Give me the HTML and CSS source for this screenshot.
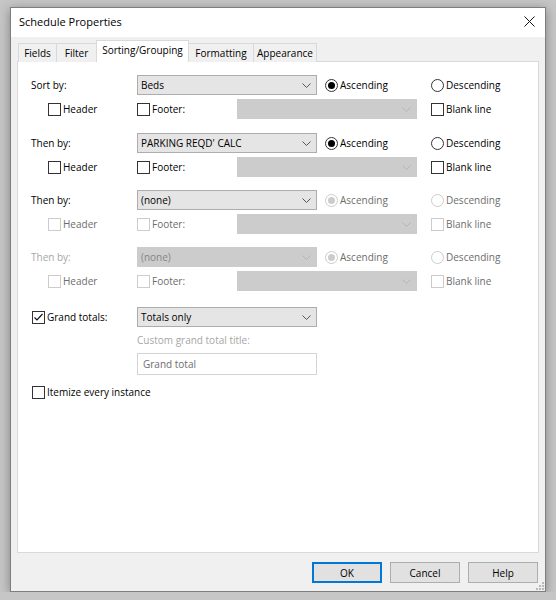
FILE: index.html
```html
<!DOCTYPE html>
<html>
<head>
<meta charset="utf-8">
<link rel="stylesheet" href="styles.css">
</head>
<body>
<div class="dialog">
  <div class="titlebar">
    <span class="title">Schedule Properties</span>
    <svg class="close" width="11" height="11" viewBox="0 0 11 11"><path d="M0.5 0.5L10.5 10.5M10.5 0.5L0.5 10.5" stroke="#111" stroke-width="1" fill="none"/></svg>
  </div>
  <div class="content">
    <div class="tabs">
      <div class="tab t-fields">Fields</div>
      <div class="tab t-filter">Filter</div>
      <div class="tab t-sort active">Sorting/Grouping</div>
      <div class="tab t-format">Formatting</div>
      <div class="tab t-appear">Appearance</div>
    </div>
    <div class="panel">
      <div class="groups">
        <div class="group">
          <div class="row-main">
            <span class="lbl">Sort by:</span>
            <div class="select"><span>Beds</span><svg class="chev" width="9" height="5" viewBox="0 0 9 5"><path d="M0.5 0.5L4.5 4.5L8.5 0.5" fill="none" stroke="#555" stroke-width="1"/></svg></div>
            <label class="radio asc checked"><i></i>Ascending</label>
            <label class="radio"><i></i>Descending</label>
          </div>
          <div class="row-sub">
            <label class="check hdr"><i></i>Header</label>
            <label class="check ftr"><i></i>Footer:</label>
            <div class="select off wide"><span></span><svg class="chev" width="9" height="5" viewBox="0 0 9 5"><path d="M0.5 0.5L4.5 4.5L8.5 0.5" fill="none" stroke="#b4b4b4" stroke-width="1"/></svg></div>
            <label class="check blank"><i></i>Blank line</label>
          </div>
        </div>
        <div class="group">
          <div class="row-main">
            <span class="lbl">Then by:</span>
            <div class="select"><span>PARKING REQD' CALC</span><svg class="chev" width="9" height="5" viewBox="0 0 9 5"><path d="M0.5 0.5L4.5 4.5L8.5 0.5" fill="none" stroke="#555" stroke-width="1"/></svg></div>
            <label class="radio asc checked"><i></i>Ascending</label>
            <label class="radio"><i></i>Descending</label>
          </div>
          <div class="row-sub">
            <label class="check hdr"><i></i>Header</label>
            <label class="check ftr"><i></i>Footer:</label>
            <div class="select off wide"><span></span><svg class="chev" width="9" height="5" viewBox="0 0 9 5"><path d="M0.5 0.5L4.5 4.5L8.5 0.5" fill="none" stroke="#b4b4b4" stroke-width="1"/></svg></div>
            <label class="check blank"><i></i>Blank line</label>
          </div>
        </div>
        <div class="group">
          <div class="row-main">
            <span class="lbl">Then by:</span>
            <div class="select"><span>(none)</span><svg class="chev" width="9" height="5" viewBox="0 0 9 5"><path d="M0.5 0.5L4.5 4.5L8.5 0.5" fill="none" stroke="#555" stroke-width="1"/></svg></div>
            <label class="radio asc checked dis"><i></i>Ascending</label>
            <label class="radio dis"><i></i>Descending</label>
          </div>
          <div class="row-sub">
            <label class="check hdr dis"><i></i>Header</label>
            <label class="check ftr dis"><i></i>Footer:</label>
            <div class="select off wide"><span></span><svg class="chev" width="9" height="5" viewBox="0 0 9 5"><path d="M0.5 0.5L4.5 4.5L8.5 0.5" fill="none" stroke="#b4b4b4" stroke-width="1"/></svg></div>
            <label class="check blank dis"><i></i>Blank line</label>
          </div>
        </div>
        <div class="group">
          <div class="row-main">
            <span class="lbl dis-lbl">Then by:</span>
            <div class="select off"><span class="off-text">(none)</span><svg class="chev" width="9" height="5" viewBox="0 0 9 5"><path d="M0.5 0.5L4.5 4.5L8.5 0.5" fill="none" stroke="#b4b4b4" stroke-width="1"/></svg></div>
            <label class="radio asc checked dis"><i></i>Ascending</label>
            <label class="radio dis"><i></i>Descending</label>
          </div>
          <div class="row-sub">
            <label class="check hdr dis"><i></i>Header</label>
            <label class="check ftr dis"><i></i>Footer:</label>
            <div class="select off wide"><span></span><svg class="chev" width="9" height="5" viewBox="0 0 9 5"><path d="M0.5 0.5L4.5 4.5L8.5 0.5" fill="none" stroke="#b4b4b4" stroke-width="1"/></svg></div>
            <label class="check blank dis"><i></i>Blank line</label>
          </div>
        </div>
      </div>

      <div class="totals">
        <div class="row-main">
          <label class="check gt"><i><svg width="11" height="11" viewBox="0 0 11 11"><path d="M1.5 5.5L4 8L9.5 2" fill="none" stroke="#111" stroke-width="1.2"/></svg></i>Grand totals:</label>
          <div class="select"><span>Totals only</span><svg class="chev" width="9" height="5" viewBox="0 0 9 5"><path d="M0.5 0.5L4.5 4.5L8.5 0.5" fill="none" stroke="#555" stroke-width="1"/></svg></div>
        </div>
        <div class="custom">
          <span class="custom-lbl">Custom grand total title:</span>
          <div class="textbox">Grand total</div>
        </div>
      </div>

      <label class="check itemize"><i></i>Itemize every instance</label>
    </div>
    <div class="buttons">
      <div class="btn default">OK</div>
      <div class="btn">Cancel</div>
      <div class="btn">Help</div>
    </div>
  </div>
  <svg class="grip" width="9" height="9" viewBox="0 0 9 9"><g fill="#b8b8b8"><rect x="7" y="1" width="2" height="2"/><rect x="4" y="4" width="2" height="2"/><rect x="7" y="4" width="2" height="2"/><rect x="1" y="7" width="2" height="2"/><rect x="4" y="7" width="2" height="2"/><rect x="7" y="7" width="2" height="2"/></g></svg>
</div>
</body>
</html>
```

FILE: styles.css
```css
* { box-sizing: border-box; }

body {
  margin: 0;
  padding: 7px 10px 0 10px;
  background: #c6c6c6;
  font-family: "Open Sans", "Noto Sans", Arial, sans-serif;
  font-size: 10px;
  color: #000;
}

.dialog {
  width: 536px;
  height: 585px;
  background: #f0f0f0;
  border: 1px solid #7e7e7e;
  box-shadow: 0 2px 10px rgba(0, 0, 0, 0.35);
  display: flex;
  flex-direction: column;
  position: relative;
}

.titlebar {
  height: 29px;
  background: #fff;
  display: flex;
  align-items: center;
  justify-content: space-between;
  padding: 0 10px 2px 8px;
}

.title { color: #000; font-size: 11px; }

.content {
  flex: 1;
  display: flex;
  flex-direction: column;
  padding: 3px 6px 8px 6px;
}

.tabs {
  display: flex;
  align-items: flex-end;
  height: 22px;
  padding-left: 1px;
  margin-bottom: -1px;
  position: relative;
  z-index: 1;
}

.tab {
  height: 19px;
  border: 1px solid #d9d9d9;
  border-bottom: none;
  border-right: none;
  display: flex;
  align-items: center;
  justify-content: center;
  background: #f0f0f0;
  color: #000;
}
.t-appear { border-right: 1px solid #d9d9d9; }
.t-fields { width: 38px; }
.t-filter { width: 40px; }
.t-sort { width: 93px; }
.t-format { width: 64px; }
.t-appear { width: 64px; }

.tab.active {
  height: 22px;
  background: #fff;
  border-right: 1px solid #d9d9d9;
  padding-bottom: 3px;
}
.tab.active + .tab { border-left: none; }

.panel {
  flex: 1;
  background: #fff;
  border: 1px solid #d9d9d9;
  padding: 13px 13px;
}

.groups {
  display: flex;
  flex-direction: column;
  gap: 13px;
}
.group:first-child { margin-bottom: 1px; }

.group {
  display: flex;
  flex-direction: column;
  gap: 4px;
}

.row-main, .row-sub {
  display: flex;
  align-items: center;
  height: 20px;
}

.row-sub { padding-left: 17px; }

.lbl { width: 106px; }
.dis-lbl { color: #a6a6a6; }

.select {
  width: 180px;
  height: 20px;
  background: #e5e5e5;
  border: 1px solid #adadad;
  display: flex;
  align-items: center;
  justify-content: space-between;
  padding: 0 5px 0 3px;
}
.select.off {
  background: #cccccc;
  border-color: #cccccc;
}
.off-text { color: #858585; }

.radio, .check {
  display: flex;
  align-items: center;
  gap: 2px;
}
.radio i {
  width: 13px;
  height: 13px;
  border: 1px solid #333;
  border-radius: 50%;
  background: #fff;
  display: flex;
  align-items: center;
  justify-content: center;
}
.radio.checked i::after {
  content: "";
  width: 7px;
  height: 7px;
  border-radius: 50%;
  background: #000;
}
.radio.dis { color: #6d6d6d; }
.radio.dis i { border-color: #cccccc; }
.radio.dis.checked i::after { background: #cccccc; }
.radio.asc { width: 106px; margin-left: 8px; }

.check i {
  width: 13px;
  height: 13px;
  border: 1px solid #333;
  background: #fff;
  display: flex;
  align-items: center;
  justify-content: center;
}
.check.dis { color: #6d6d6d; }
.check.dis i { border-color: #cccccc; }

.hdr { width: 89px; }
.ftr { width: 100px; }
.blank { margin-left: 14px; }

.totals { margin-top: 16px; }
.gt { width: 105px; margin-left: 1px; }

.custom {
  margin-left: 106px;
  display: flex;
  flex-direction: column;
}
.custom-lbl {
  color: #a6a6a6;
  margin-top: 7px;
  line-height: 12px;
}
.textbox {
  margin-top: 7px;
  width: 180px;
  height: 22px;
  border: 1px solid #d4d4d4;
  color: #6d6d6d;
  display: flex;
  align-items: center;
  padding-left: 5px;
}

.itemize {
  margin-top: 10px;
  margin-left: 1px;
}

.buttons {
  display: flex;
  justify-content: flex-end;
  gap: 8px;
  margin-top: 9px;
  padding-right: 1px;
}
.btn {
  width: 70px;
  height: 21px;
  background: #e1e1e1;
  border: 1px solid #adadad;
  display: flex;
  align-items: center;
  justify-content: center;
}
.btn.default {
  border: 2px solid #0078d7;
}

.grip {
  position: absolute;
  right: 1px;
  bottom: 1px;
}
```
